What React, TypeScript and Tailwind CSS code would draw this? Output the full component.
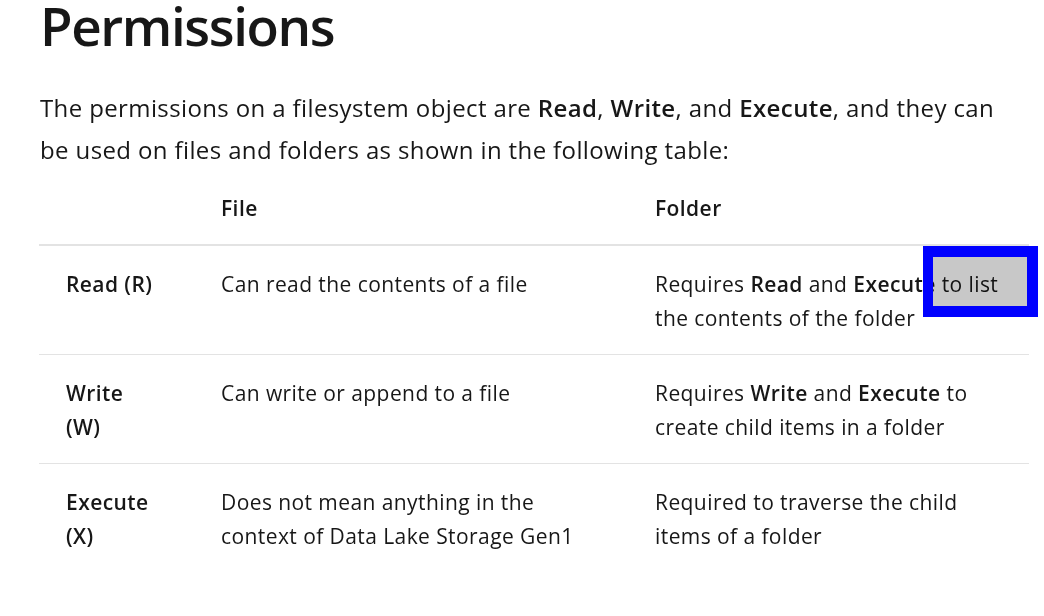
import React from "react";

const rows = [
  {
    name: "Read (R)",
    file: "Can read the contents of a file",
    folder: (
      <>
        Requires <b className="font-semibold">Read</b> and <b className="font-semibold">Execute</b> to list the contents of the folder
      </>
    ),
  },
  {
    name: "Write (W)",
    file: "Can write or append to a file",
    folder: (
      <>
        Requires <b className="font-semibold">Write</b> and <b className="font-semibold">Execute</b> to create child items in a folder
      </>
    ),
  },
  {
    name: "Execute (X)",
    file: "Does not mean anything in the context of Data Lake Storage Gen1",
    folder: <>Required to traverse the child items of a folder</>,
  },
];

export default function App() {
  return (
    <div className="relative w-[1044px] h-[616px] overflow-hidden bg-white text-[#171717] font-['Open_Sans',sans-serif]">
      <div className="pl-[40px] pr-[15px]">
        <h1 className="text-[53px] leading-[52px] font-semibold tracking-[-1.4px]">Permissions</h1>
        <p className="mt-[35px] pr-[25px] text-[24px] leading-[42px] tracking-[0.38px]">
          The permissions on a filesystem object are <b className="font-semibold">Read</b>,{" "}
          <b className="font-semibold">Write</b>, and <b className="font-semibold">Execute</b>, and they can be used on
          files and folders as shown in the following table:
        </p>
        <div className="w-[990px] -ml-[1px] text-[21px] leading-[34px] tracking-[0.42px]">
          <div className="grid grid-cols-[155px_434px_401px] border-b-2 border-[#e3e3e3] font-semibold">
            <div className="pl-[27px] pr-[34px] pt-[20px] pb-[19px]"></div>
            <div className="pl-[27px] pr-[40px] pt-[20px] pb-[19px]">File</div>
            <div className="pl-[27px] pr-[24px] pt-[20px] pb-[19px]">Folder</div>
          </div>
          {rows.map((r, i) => (
            <div
              key={i}
              className={
                "grid grid-cols-[155px_434px_401px] " + (i < rows.length - 1 ? "border-b border-[#e3e3e3]" : "")
              }
            >
              <div className="pl-[27px] pr-[34px] pt-[21px] pb-[19px] font-semibold">{r.name}</div>
              <div className="pl-[27px] pr-[40px] pt-[21px] pb-[19px]">{r.file}</div>
              <div className="pl-[27px] pr-[24px] pt-[21px] pb-[19px]">{r.folder}</div>
            </div>
          ))}
        </div>
      </div>
      <div className="absolute left-[923px] top-[246px] w-[115px] h-[71px] border-[11px] border-l-[10px] border-[#0000ff]">
        <div className="w-full h-full bg-[#c8c8c8] mix-blend-multiply"></div>
      </div>
    </div>
  );
}
